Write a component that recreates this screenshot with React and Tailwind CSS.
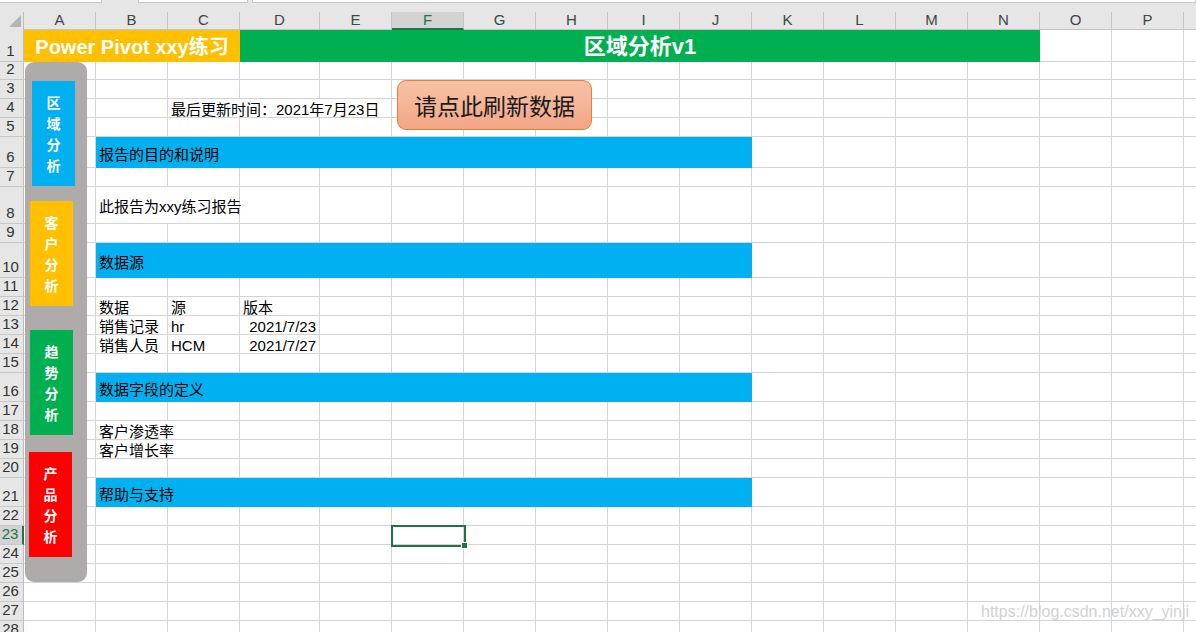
import React from "react";

const COLS = ["A","B","C","D","E","F","G","H","I","J","K","L","M","N","O","P","Q"];
const NROWS = 28;

const txt = "text-[15px] text-black";
const normal = "border-r border-b border-[#d4d4d4] flex items-center pt-[5px] px-[3px] whitespace-nowrap " + txt;
const blue = "col-span-9 bg-[#00B0F0] flex items-center pt-[5px] px-[3px] whitespace-nowrap " + txt;

const SPEC = {
  1: [
    { c: 1, span: 3, cls: "col-span-3 bg-[#FFC000] flex items-center justify-center pt-[1px] text-white font-bold text-[20px] whitespace-nowrap", text: "Power Pivot xxy练习" },
    { c: 4, span: 11, cls: "col-span-11 bg-[#00B050] flex items-center justify-center pt-[1px] text-white font-bold text-[22px] whitespace-nowrap", text: "区域分析v1" },
  ],
  4: [{ c: 3, span: 3, cls: "col-span-3 " + normal, text: "最后更新时间：2021年7月23日" }],
  6: [{ c: 2, span: 9, cls: blue, text: "报告的目的和说明" }],
  8: [{ c: 2, span: 2, cls: "col-span-2 " + normal, text: "此报告为xxy练习报告" }],
  10: [{ c: 2, span: 9, cls: blue, text: "数据源" }],
  12: [
    { c: 2, span: 1, cls: normal, text: "数据" },
    { c: 3, span: 1, cls: normal, text: "源" },
    { c: 4, span: 1, cls: normal, text: "版本" },
  ],
  13: [
    { c: 2, span: 1, cls: normal, text: "销售记录" },
    { c: 3, span: 1, cls: normal, text: "hr" },
    { c: 4, span: 1, cls: normal + " justify-end", text: "2021/7/23" },
  ],
  14: [
    { c: 2, span: 1, cls: normal, text: "销售人员" },
    { c: 3, span: 1, cls: normal, text: "HCM" },
    { c: 4, span: 1, cls: normal + " justify-end", text: "2021/7/27" },
  ],
  16: [{ c: 2, span: 9, cls: blue, text: "数据字段的定义" }],
  18: [{ c: 2, span: 2, cls: "col-span-2 " + normal, text: "客户渗透率" }],
  19: [{ c: 2, span: 2, cls: "col-span-2 " + normal, text: "客户增长率" }],
  21: [{ c: 2, span: 9, cls: blue, text: "帮助与支持" }],
};

function rowCells(r) {
  const out = [];
  const spec = SPEC[r] || [];
  const active = r === 23;
  out.push(
    <div
      key={`h${r}`}
      className={
        "flex items-end justify-center pr-[2px] pb-[1px] text-[15px] leading-[18px] border-b border-[#c8c8c8] " +
        (active
          ? "bg-[#d2d2d2] text-[#217346] border-r-2 border-r-[#217346]"
          : "bg-[#e6e6e6] text-[#333333] border-r border-r-[#bcbcbc]")
      }
    >
      {r}
    </div>
  );
  let c = 1;
  while (c <= COLS.length) {
    const s = spec.find((x) => x.c === c);
    if (s) {
      out.push(
        <div key={`${r}-${c}`} className={s.cls}>
          {s.text}
        </div>
      );
      c += s.span;
    } else {
      out.push(<div key={`${r}-${c}`} className="border-r border-b border-[#d4d4d4]" />);
      c += 1;
    }
  }
  return out;
}

function NavButton({ cls, chars }) {
  return (
    <div className={"w-[43px] h-[105px] flex flex-col items-center justify-center text-white font-bold text-[14px] leading-[21px] " + cls}>
      {chars.map((ch, i) => (
        <span key={i}>{ch}</span>
      ))}
    </div>
  );
}

export default function App() {
  return (
    <div className="relative w-[1196px] h-[632px] overflow-hidden bg-white font-['Liberation_Sans','Noto_Sans_CJK_SC',sans-serif]">
      {/* formula bar bottom strip */}
      <div className="h-[12px] bg-[#e6e6e6] flex items-start gap-[4px]">
        <div className="w-[102px] h-[3px] bg-white border-r border-b border-[#c6c6c6]" />
        <div className="w-[28px]" />
        <div className="w-[110px] h-[3px] bg-white border-x border-b border-[#c6c6c6]" />
        <div className="w-[946px] h-[3px] bg-white border-x border-b border-[#c6c6c6]" />
      </div>

      {/* sheet grid */}
      <div className="grid grid-cols-[24px_72px_72px_72px_80px_72px_72px_72px_72px_72px_72px_72px_72px_72px_72px_72px_72px_72px] grid-rows-[18px_32px_18px_19px_19px_19px_31px_19px_37px_19px_35px_19px_19px_19px_19px_19px_29px_19px_19px_19px_19px_29px_19px_19px_19px_19px_19px_19px_19px]">
        {/* corner */}
        <div className="bg-[#e6e6e6] border-r border-[#bcbcbc] flex items-end justify-end pr-[2px] pb-[3px]">
          <svg width="12" height="12" viewBox="0 0 12 12">
            <polygon points="12,0 12,12 0,12" fill="#b4b4b4" />
          </svg>
        </div>
        {COLS.map((l, i) => (
          <div
            key={l}
            className={
              "flex items-center justify-center text-[15px] border-r border-[#c4c4c4] " +
              (i === 5
                ? "bg-[#d2d2d2] text-[#217346] border-b-2 border-b-[#217346]"
                : "bg-[#e6e6e6] text-[#444444] border-b border-b-[#c4c4c4]")
            }
          >
            {l}
          </div>
        ))}
        {Array.from({ length: NROWS }, (_, i) => rowCells(i + 1))}
      </div>

      {/* navigation shape panel */}
      <div className="absolute left-[25px] top-[62px] w-[62px] h-[520px] rounded-[9px] bg-[#AFABAB] flex flex-col font-['Noto_Sans_CJK_SC',sans-serif]">
        <div className="mt-[19px] ml-[7px]">
          <NavButton cls="bg-[#00B0F0]" chars={["区", "域", "分", "析"]} />
        </div>
        <div className="mt-[15px] ml-[5px]">
          <NavButton cls="bg-[#FFC000]" chars={["客", "户", "分", "析"]} />
        </div>
        <div className="mt-[24px] ml-[5px]">
          <NavButton cls="bg-[#00B050]" chars={["趋", "势", "分", "析"]} />
        </div>
        <div className="mt-[17px] ml-[4px]">
          <NavButton cls="bg-[#FF0000]" chars={["产", "品", "分", "析"]} />
        </div>
      </div>

      {/* refresh button shape */}
      <div className="absolute left-[397px] top-[80px] w-[195px] h-[50px] rounded-[9px] border border-[#ED7D31] bg-gradient-to-b from-[#F7C2A8] to-[#F3A685] flex items-center justify-center text-[23px] text-[#1a1a1a] font-['Noto_Sans_CJK_SC',sans-serif]">
        请点此刷新数据
      </div>

      {/* active cell F23 */}
      <div className="absolute left-[391px] top-[525px] w-[75px] h-[22px] border-2 border-[#217346]" />
      <div className="absolute left-[461px] top-[542px] w-[7px] h-[7px] bg-[#217346] border border-white" />

      {/* watermark */}
      <div className="absolute left-[981px] top-[602px] text-[16px] leading-[20px] text-[#d2d2d2] whitespace-nowrap">
        https://blog.csdn.net/xxy_yinji
      </div>
    </div>
  );
}
